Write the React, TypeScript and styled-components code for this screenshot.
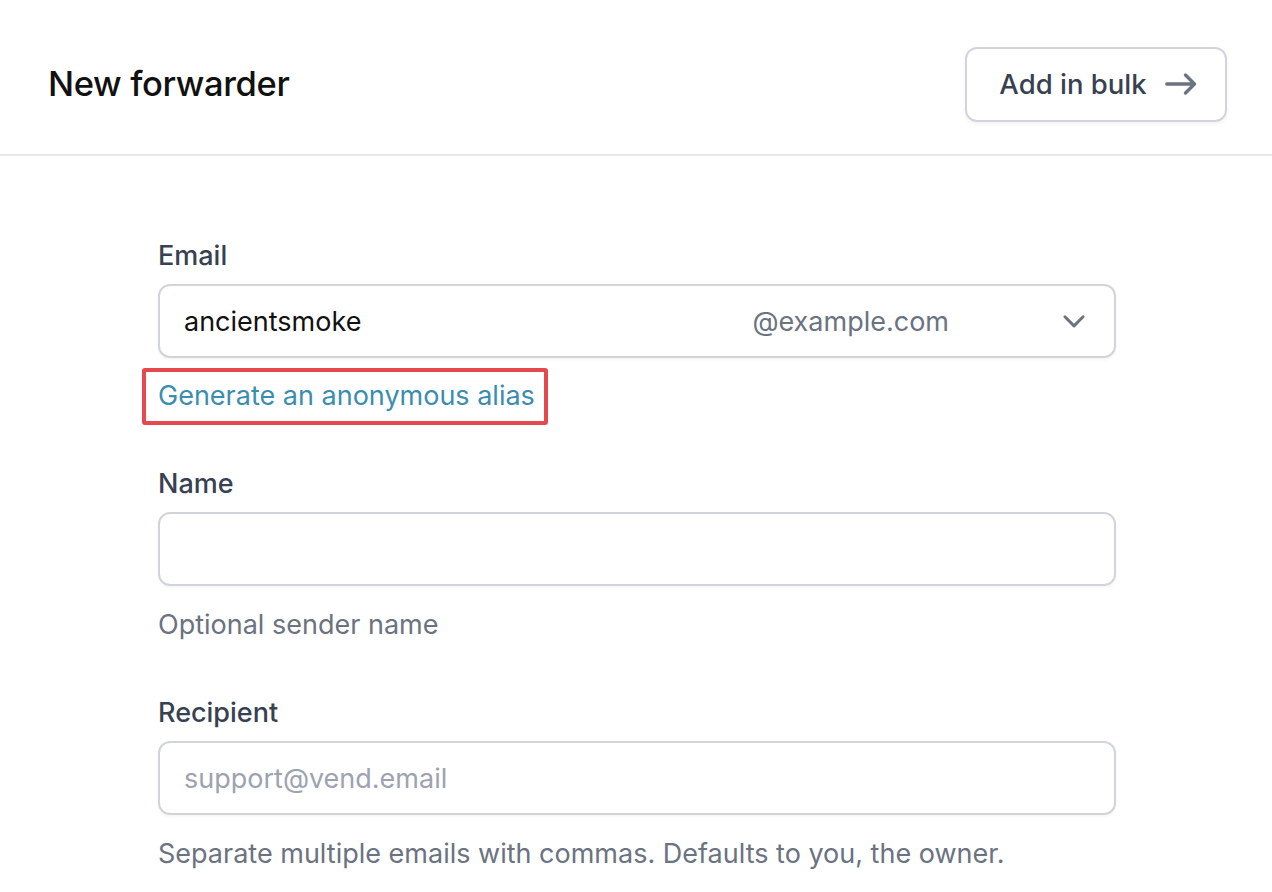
import React from 'react';
import styled, { createGlobalStyle } from 'styled-components';

const GlobalStyle = createGlobalStyle`
  html, body {
    margin: 0;
    padding: 0;
    background: #FFFFFF;
  }
  body {
    font-family: Inter, "Noto Sans", "Liberation Sans", sans-serif;
    -webkit-font-smoothing: antialiased;
  }
  * {
    box-sizing: border-box;
  }
`;

const App: React.FC = () => {
  return (
    <>
      <GlobalStyle />
      <Page>
        <Header>
          <Title>New forwarder</Title>
          <BulkButton type="button">
            Add in bulk
            <svg width="36" height="36" viewBox="0 0 24 24" fill="none" stroke="#6B7280" strokeWidth="2.2" strokeLinecap="round" strokeLinejoin="round">
              <path d="M2.5 12h18.5M15 6l6 6-6 6" />
            </svg>
          </BulkButton>
        </Header>

        <Form>
          <Field $after={39}>
            <Label>Email</Label>
            <InputBox>
              <Value>ancientsmoke</Value>
              <Domain>@example.com</Domain>
              <svg width="28" height="28" viewBox="0 0 20 20" fill="none" stroke="#6B7280" strokeWidth="2.1" strokeLinecap="round" strokeLinejoin="round">
                <path d="M3.5 7 10 13.5 16.5 7" />
              </svg>
            </InputBox>
            <Highlight>
              <Link href="#">Generate an anonymous alias</Link>
            </Highlight>
          </Field>

          <Field $after={48}>
            <Label>Name</Label>
            <InputBox />
            <Help>Optional sender name</Help>
          </Field>

          <Field $after={0}>
            <Label>Recipient</Label>
            <InputBox>
              <Placeholder>support@vend.email</Placeholder>
            </InputBox>
            <Help>Separate multiple emails with commas. Defaults to you, the owner.</Help>
          </Field>
        </Form>
      </Page>
    </>
  );
};

const Page = styled.div`
  width: 1272px;
  min-height: 892px;
  background: #FFFFFF;
`;

const Header = styled.div`
  height: 156px;
  display: flex;
  align-items: center;
  justify-content: space-between;
  padding: 14px 45px 0 48px;
  border-bottom: 2px solid #E5E7EB;
`;

const Title = styled.h1`
  margin: 0;
  font-size: 34.5px;
  line-height: 48px;
  font-weight: 500;
  color: #111111;
  letter-spacing: -0.01em;
`;

const BulkButton = styled.button`
  width: 262px;
  height: 75px;
  display: flex;
  align-items: center;
  justify-content: center;
  gap: 16px;
  padding: 0 0 0 6px;
  background: #FFFFFF;
  border: 2px solid #D1D5DB;
  border-radius: 12px;
  box-shadow: 0 2px 4px rgba(0, 0, 0, 0.05);
  font-family: inherit;
  font-size: 27.5px;
  font-weight: 500;
  color: #374151;
  cursor: pointer;
`;

const Form = styled.div`
  width: 958px;
  margin-left: 158px;
  padding-top: 80px;
  display: flex;
  flex-direction: column;
`;

const Field = styled.div<{ $after: number }>`
  display: flex;
  flex-direction: column;
  align-items: flex-start;
  margin-bottom: ${(p) => p.$after}px;
`;

const Label = styled.label`
  font-size: 27px;
  line-height: 40px;
  font-weight: 500;
  color: #374151;
  margin-bottom: 8px;
`;

const InputBox = styled.div`
  width: 100%;
  height: 74px;
  display: flex;
  align-items: center;
  padding: 0 26px 0 24px;
  border: 2px solid #D1D5DB;
  border-radius: 12px;
  box-shadow: 0 2px 3px rgba(0, 0, 0, 0.04);
  font-size: 27px;
  background: #FFFFFF;
`;

const Value = styled.span`
  flex: 1;
  color: #111111;
`;

const Domain = styled.span`
  color: #6B7280;
  margin-right: 111px;
`;

const Placeholder = styled.span`
  color: #9CA3AF;
`;

const Highlight = styled.div`
  margin: 10px 0 0 -16px;
  padding: 0 9px 2px 12px;
  border: 4px solid #E5484D;
  border-radius: 3px;
`;

const Link = styled.a`
  font-size: 27px;
  line-height: 47px;
  color: #3B8DB0;
  text-decoration: none;
`;

const Help = styled.p`
  margin: 19px 0 0;
  font-size: 27px;
  line-height: 40px;
  color: #6B7280;
`;

export default App;
